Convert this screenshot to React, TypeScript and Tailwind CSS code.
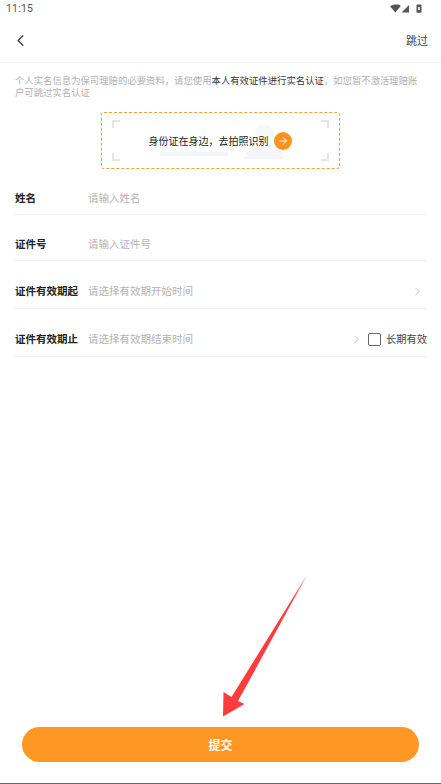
import { ChevronLeft, ChevronRight, ArrowRight } from 'lucide-react';

const font = { fontFamily: '"Noto Sans CJK SC", "Noto Sans", sans-serif' };

function Corner({ className }: { className: string }) {
  return <div className={`absolute w-2 h-2 border-[#e3e6ee] ${className}`} />;
}

function Row({ label, placeholder, height, children }: { label: string; placeholder: string; height: string; children?: React.ReactNode }) {
  return (
    <div className={`flex items-center border-b border-[#eeeeee] ${height}`}>
      <span className="w-[73px] shrink-0 text-[10.5px] font-bold text-[#222222]">{label}</span>
      <span className="flex-1 text-[10.5px] text-[#b3b3b3]">{placeholder}</span>
      {children}
    </div>
  );
}

export default function App() {
  return (
    <div className="h-[784px] w-[441px] flex flex-col bg-white overflow-hidden" style={font}>
      {/* status bar */}
      <div className="h-[18px] flex items-center justify-between pl-[6px] pr-[19px] shrink-0">
        <span className="text-[10.5px] text-[#555555] tracking-[0.2px]" style={{ fontFamily: 'Roboto, sans-serif' }}>11:15</span>
        <svg width="32" height="10" viewBox="0 0 32 10">
          <path d="M0 2.2C2.2.6 5.4.2 8.2.6 9.2.8 10.2 1.4 10.8 2L5.4 8.6Z" fill="#555555" />
          <path d="M19 1V8.6H11.6Z" fill="#555555" />
          <rect x="26.5" y="0.6" width="5" height="8.2" rx="0.8" fill="#555555" />
          <rect x="28" y="3" width="2" height="3" fill="#dddddd" />
        </svg>
      </div>

      {/* nav */}
      <div className="h-[45px] flex items-center justify-between pl-[11px] pr-[13px] border-b border-[#f2f2f2] shrink-0">
        <ChevronLeft size={19} strokeWidth={1.5} color="#333333" />
        <span className="text-[11px] text-[#444444]">跳过</span>
      </div>

      <div className="flex-1 flex flex-col px-[14px]">
        <p className="mt-[11px] pl-px pr-[6px] text-[9.37px] leading-[12px] text-[#b0b0b0]">
          个人实名信息为保司理赔的必要资料，请您使用<span className="text-[#333333]">本人有效证件进行实名认证</span>，如您暂不激活理赔账户可跳过实名认证
        </p>

        {/* id card scan entry */}
        <div className="relative mt-[14px] ml-[87px] w-[239px] h-[57px] rounded-[3px] border border-dashed border-[#f0a02c] flex items-center justify-center">
          <Corner className="left-[10px] top-[7px] border-l-2 border-t-2" />
          <Corner className="right-[10px] top-[7px] border-r-2 border-t-2" />
          <Corner className="left-[10px] bottom-[7px] border-l-2 border-b-2" />
          <Corner className="right-[10px] bottom-[7px] border-r-2 border-b-2" />
          <div className="absolute left-[58px] top-[39px] w-[68px] h-[4px] bg-[#f5f6f8]" />
          <svg className="absolute left-[143px] top-[9px]" width="38" height="37" viewBox="0 0 38 37">
            <circle cx="19" cy="11" r="9" fill="#f7f8fa" />
            <path d="M0 37C0 25 8 22 19 22S38 25 38 37Z" fill="#f5f6f8" />
          </svg>
          <span className="relative text-[10px] text-[#222222]">身份证在身边，去拍照识别</span>
          <span className="relative ml-[5px] mr-[1px] w-[18px] h-[18px] rounded-full bg-[#f7931e] flex items-center justify-center">
            <ArrowRight size={12} strokeWidth={1.8} color="#ffffff" />
          </span>
        </div>

        {/* form */}
        <div className="pl-px mt-[13px]">
          <Row label="姓名" placeholder="请输入姓名" height="h-[33px]" />
          <Row label="证件号" placeholder="请输入证件号" height="h-[46px] pt-[13px]" />
          <Row label="证件有效期起" placeholder="请选择有效期开始时间" height="h-[48px] pt-[13px]">
            <ChevronRight size={13} strokeWidth={1.3} color="#aaaaaa" className="mr-[3px]" />
          </Row>
          <Row label="证件有效期止" placeholder="请选择有效期结束时间" height="h-[48px] pt-[13px]">
            <ChevronRight size={13} strokeWidth={1.3} color="#aaaaaa" />
            <span className="ml-[5px] w-[13px] h-[13px] rounded-[2px] border border-[#666666]" />
            <span className="ml-[5px] text-[10.25px] text-[#444444]">长期有效</span>
          </Row>
        </div>

        <div className="flex-1" />

        {/* submit */}
        <button className="mx-[8px] h-[35px] rounded-full bg-[#ff9724] text-[12px] font-bold text-white">提交</button>
        <div className="h-[21px]" />
      </div>
      <div className="h-[1px] bg-[#666666] shrink-0" />

      {/* annotation arrow */}
      <svg className="absolute left-0 top-0 pointer-events-none" width="441" height="784" viewBox="0 0 441 784">
        <path d="M307 575 L231.5 697 L223.5 692 L223 716.5 L244.5 704 L238 701 Z" fill="#ff3b3b" />
      </svg>
    </div>
  );
}
